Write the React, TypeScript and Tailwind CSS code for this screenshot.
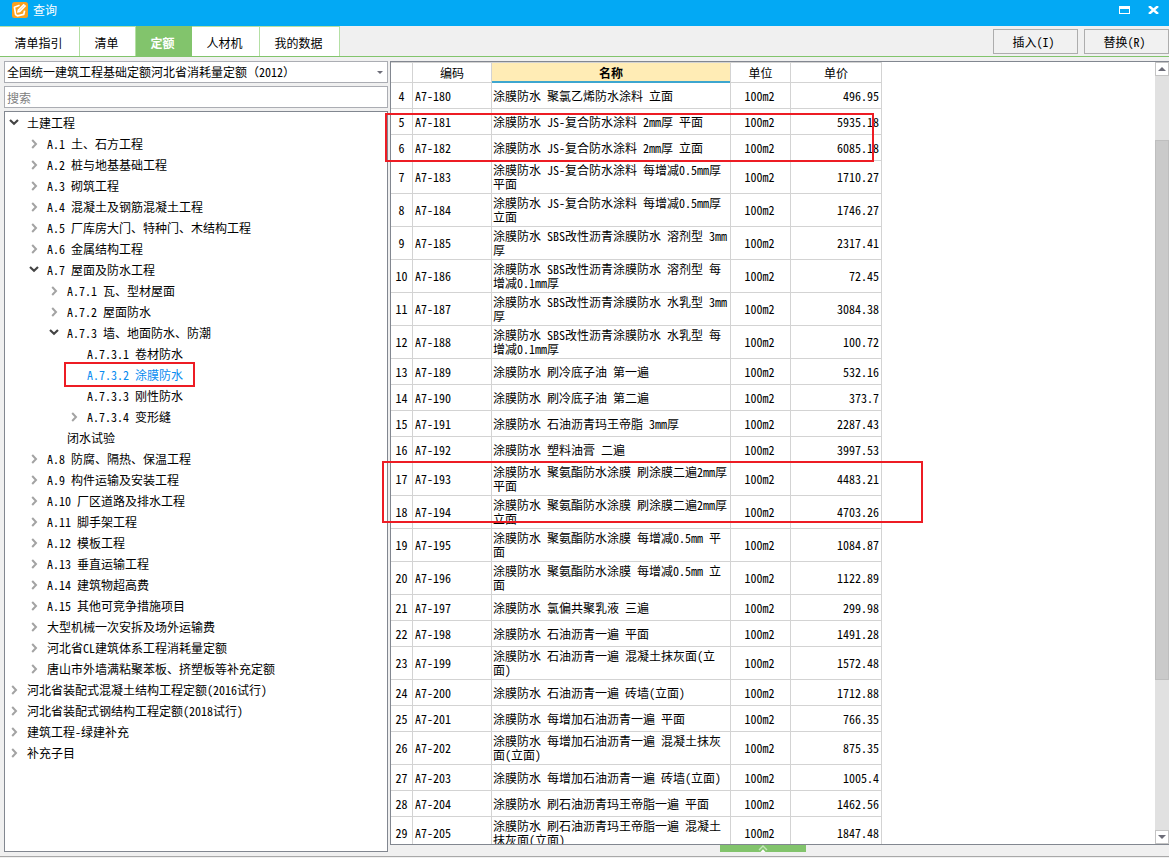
import React from "react";

type Node = { label: string; level: number; state?: "open" | "closed"; selected?: boolean };

const tree: Node[] = [
  { label: "土建工程", level: 0, state: "open" },
  { label: "A.1 土、石方工程", level: 1, state: "closed" },
  { label: "A.2 桩与地基基础工程", level: 1, state: "closed" },
  { label: "A.3 砌筑工程", level: 1, state: "closed" },
  { label: "A.4 混凝土及钢筋混凝土工程", level: 1, state: "closed" },
  { label: "A.5 厂库房大门、特种门、木结构工程", level: 1, state: "closed" },
  { label: "A.6 金属结构工程", level: 1, state: "closed" },
  { label: "A.7 屋面及防水工程", level: 1, state: "open" },
  { label: "A.7.1 瓦、型材屋面", level: 2, state: "closed" },
  { label: "A.7.2 屋面防水", level: 2, state: "closed" },
  { label: "A.7.3 墙、地面防水、防潮", level: 2, state: "open" },
  { label: "A.7.3.1 卷材防水", level: 3 },
  { label: "A.7.3.2 涂膜防水", level: 3, selected: true },
  { label: "A.7.3.3 刚性防水", level: 3 },
  { label: "A.7.3.4 变形缝", level: 3, state: "closed" },
  { label: "闭水试验", level: 2 },
  { label: "A.8 防腐、隔热、保温工程", level: 1, state: "closed" },
  { label: "A.9 构件运输及安装工程", level: 1, state: "closed" },
  { label: "A.10 厂区道路及排水工程", level: 1, state: "closed" },
  { label: "A.11 脚手架工程", level: 1, state: "closed" },
  { label: "A.12 模板工程", level: 1, state: "closed" },
  { label: "A.13 垂直运输工程", level: 1, state: "closed" },
  { label: "A.14 建筑物超高费", level: 1, state: "closed" },
  { label: "A.15 其他可竞争措施项目", level: 1, state: "closed" },
  { label: "大型机械一次安拆及场外运输费", level: 1, state: "closed" },
  { label: "河北省CL建筑体系工程消耗量定额", level: 1, state: "closed" },
  { label: "唐山市外墙满粘聚苯板、挤塑板等补充定额", level: 1, state: "closed" },
  { label: "河北省装配式混凝土结构工程定额(2016试行)", level: 0, state: "closed" },
  { label: "河北省装配式钢结构工程定额(2018试行)", level: 0, state: "closed" },
  { label: "建筑工程-绿建补充", level: 0, state: "closed" },
  { label: "补充子目", level: 0, state: "closed" },
];

const indents = ["pl-1", "pl-6", "pl-11", "pl-16"];

const rows: [number, string, string][] = [
  [4, "聚氯乙烯防水涂料 立面", "496.95"],
  [5, "JS-复合防水涂料 2mm厚 平面", "5935.18"],
  [6, "JS-复合防水涂料 2mm厚 立面", "6085.18"],
  [7, "JS-复合防水涂料 每增减0.5mm厚 平面", "1710.27"],
  [8, "JS-复合防水涂料 每增减0.5mm厚 立面", "1746.27"],
  [9, "SBS改性沥青涂膜防水 溶剂型 3mm厚", "2317.41"],
  [10, "SBS改性沥青涂膜防水 溶剂型 每增减0.1mm厚", "72.45"],
  [11, "SBS改性沥青涂膜防水 水乳型 3mm厚", "3084.38"],
  [12, "SBS改性沥青涂膜防水 水乳型 每增减0.1mm厚", "100.72"],
  [13, "刷冷底子油 第一遍", "532.16"],
  [14, "刷冷底子油 第二遍", "373.7"],
  [15, "石油沥青玛王帝脂 3mm厚", "2287.43"],
  [16, "塑料油膏 二遍", "3997.53"],
  [17, "聚氨酯防水涂膜 刷涂膜二遍2mm厚 平面", "4483.21"],
  [18, "聚氨酯防水涂膜 刷涂膜二遍2mm厚 立面", "4703.26"],
  [19, "聚氨酯防水涂膜 每增减0.5mm 平面", "1084.87"],
  [20, "聚氨酯防水涂膜 每增减0.5mm 立面", "1122.89"],
  [21, "氯偏共聚乳液 三遍", "299.98"],
  [22, "石油沥青一遍 平面", "1491.28"],
  [23, "石油沥青一遍 混凝土抹灰面(立面)", "1572.48"],
  [24, "石油沥青一遍 砖墙(立面)", "1712.88"],
  [25, "每增加石油沥青一遍 平面", "766.35"],
  [26, "每增加石油沥青一遍 混凝土抹灰面(立面)", "875.35"],
  [27, "每增加石油沥青一遍 砖墙(立面)", "1005.4"],
  [28, "刷石油沥青玛王帝脂一遍 平面", "1462.56"],
  [29, "刷石油沥青玛王帝脂一遍 混凝土抹灰面(立面)", "1847.48"],
];

const tabs = [
  { label: "清单指引", width: "w-20" },
  { label: "清单", width: "w-14" },
  { label: "定额", width: "w-14", active: true },
  { label: "人材机", width: "w-17" },
  { label: "我的数据", width: "w-20" },
];

function Logo() {
  return (
    <svg width="16" height="16" viewBox="0 0 16 16" fill="none" aria-hidden="true">
      <rect width="16" height="16" rx="2.5" fill="#f9a11f" />
      <path d="M7.6 3.2 2.4 5.2 3.6 12.6 5.4 13.8 11.8 12.4 12.6 8.6" stroke="#fff" strokeWidth="1.7" strokeLinejoin="round" />
      <path d="M5 10.8 5.6 7.8 11.6 1.8 14.2 4 8.2 10.2z" fill="#fff" />
      <path d="M7.2 8.6 12.2 3.6" stroke="#fbc777" strokeWidth="0.7" />
    </svg>
  );
}

function Chevron({ state }: { state?: "open" | "closed" }) {
  return (
    <svg className="mr-[3px] shrink-0" width="10" height="10" viewBox="0 0 10 10" fill="none" aria-hidden="true">
      {state === "open" && <path d="M1 2 5 5.7 9 2" stroke="#444" strokeWidth="2.2" />}
      {state === "closed" && <path d="M3.2 1 7 5 3.2 9" stroke="#a3a3a3" strokeWidth="2" />}
    </svg>
  );
}

export default function App() {
  return (
    <div className="flex h-screen flex-col overflow-hidden bg-[#f0f0f0] font-['Noto_Sans_Mono_CJK_SC','Noto_Sans_CJK_SC',sans-serif] text-[12px] leading-[14px] text-black">
      <header className="flex h-[26px] shrink-0 items-start bg-[#03a9f4] pl-3 pt-0.5 text-white">
        <Logo />
        <h1 className="ml-[5px] mt-px grow">查询</h1>
        <button aria-label="最大化" className="mr-[18px] mt-1">
          <svg width="11" height="8" viewBox="0 0 11 8" aria-hidden="true">
            <path d="M0 0h11v8H0zM1 3v4h9V3z" fill="#fff" fillRule="evenodd" />
          </svg>
        </button>
        <button aria-label="关闭" className="mr-[10px] mt-1">
          <svg width="11" height="8" viewBox="0 0 11 8" aria-hidden="true">
            <path d="M1 0 10 8M10 0 1 8" stroke="#fff" strokeWidth="2.4" />
          </svg>
        </button>
      </header>

      <div className="flex h-[31px] shrink-0 border-b border-[#82c46c]">
        <nav className="flex">
          {tabs.map((t) => (
            <button
              key={t.label}
              className={`${t.width} border-r border-t pr-0.5 pt-0.5 ${
                t.active ? "border-[#82c46c] bg-[#82c46c] font-bold text-white" : "border-[#b4e0a4] bg-white"
              }`}
            >
              {t.label}
            </button>
          ))}
        </nav>
        <div className="ml-auto flex gap-1.5 pt-[3px]">
          <button className="h-[25px] w-[85px] border border-[#adadad] bg-[#f1f1f1] pr-1">插入(I)</button>
          <button className="h-[25px] w-[85px] border border-[#adadad] bg-[#f1f1f1] pr-1">替换(R)</button>
        </div>
      </div>

      <main className="flex min-h-0 grow pl-1 pt-1">
        <aside className="mb-1 flex w-96 shrink-0 flex-col gap-[3px]">
          <div className="relative shrink-0">
            <select
              aria-label="定额库"
              className="block h-[22px] w-full appearance-none border border-[#abadb3] bg-white pl-0.5"
            >
              <option>全国统一建筑工程基础定额河北省消耗量定额（2012）</option>
            </select>
            <svg className="pointer-events-none absolute right-[5px] top-2.5" width="6" height="3" viewBox="0 0 6 3" aria-hidden="true">
              <path d="M0 0h6L3 3z" fill="#6d6d78" />
            </svg>
          </div>
          <input
            aria-label="搜索"
            placeholder="搜索"
            className="block h-[22px] w-full shrink-0 border border-[#abadb3] bg-white pl-0.5 placeholder:text-[#808080]"
          />
          <ul className="min-h-0 grow overflow-hidden border border-[#828790] bg-white">
            {tree.map((n) => (
              <li key={n.label} className={`flex ${indents[n.level]}`}>
                <button className={`relative flex h-[21px] items-center whitespace-pre pr-3 ${n.selected ? "text-[#0a8cf0]" : ""}`}>
                  <Chevron state={n.state} />
                  <span className="pl-[5px]">{n.label}</span>
                  {n.selected && <span className="absolute -bottom-0.5 -left-[5px] right-0 -top-0.5 border-2 border-[#ed1c24]" />}
                </button>
              </li>
            ))}
          </ul>
        </aside>

        <section className="ml-0.5 flex min-w-0 grow flex-col">
          <div className="relative flex min-h-0 grow border-b border-l border-t border-[#828790] bg-white">
            <div className="min-w-0 grow overflow-hidden">
              <table className="w-[491px] table-fixed border-separate border-spacing-0">
                <colgroup>
                  <col className="w-[22px]" />
                  <col className="w-[79px]" />
                  <col className="w-[239px]" />
                  <col className="w-[60px]" />
                  <col className="w-[91px]" />
                </colgroup>
                <thead>
                  <tr className="h-[21px] [&>th]:border-r [&>th]:border-t [&>th]:border-[#d3d3d3] [&>th]:p-0">
                    <th className="border-b" aria-label="序号" />
                    <th className="border-b font-normal">编码</th>
                    <th className="bg-[#ffecb5] shadow-[inset_0_-2px_0_#3ea6cf]">名称</th>
                    <th className="border-b font-normal">单位</th>
                    <th className="border-b font-normal">单价</th>
                  </tr>
                </thead>
                <tbody className="[&_td]:border-b [&_td]:border-r [&_td]:border-[#d3d3d3] [&_td]:py-0.5">
                  {rows.map(([no, name, price]) => (
                    <tr key={no} className="h-[26px]">
                      <td className="px-0 text-center">{no}</td>
                      <td className="px-0.5">A7-{176 + no}</td>
                      <td className="px-px">涂膜防水 {name}</td>
                      <td className="pl-0 pr-0.5 text-center">100m2</td>
                      <td className="px-0.5 text-right">{price}</td>
                    </tr>
                  ))}
                </tbody>
              </table>
            </div>
            <div className="flex w-3.5 shrink-0 flex-col bg-[#e1e1e1]">
              <button aria-label="向上滚动" className="flex h-3.5 shrink-0 items-center justify-center border border-[#c4c4c4] bg-white">
                <svg width="8" height="4" viewBox="0 0 8 4" aria-hidden="true">
                  <path d="M4 0 8 4H0z" fill="#6d6d78" />
                </svg>
              </button>
              <div className="grow-[64] basis-0" />
              <div className="grow-[540] basis-0 border border-[#bebebe] bg-[#cacaca]" />
              <div className="grow-[150] basis-0" />
              <button aria-label="向下滚动" className="flex h-3.5 shrink-0 items-center justify-center border border-[#c4c4c4] bg-white">
                <svg width="8" height="4" viewBox="0 0 8 4" aria-hidden="true">
                  <path d="M0 0h8L4 4z" fill="#6d6d78" />
                </svg>
              </button>
            </div>
            <div className="pointer-events-none absolute -left-1.5 top-[51px] h-[49px] w-[489px] border-2 border-[#ed1c24]" />
            <div className="pointer-events-none absolute -left-[9px] top-[399px] h-[62px] w-[541px] border-2 border-[#ed1c24]" />
          </div>
          <div className="h-[11px] shrink-0">
            <button aria-label="展开" className="ml-[330px] flex h-[7px] w-[86px] items-end justify-center bg-[#82c46c]">
              <svg width="10" height="7" viewBox="0 0 10 7" fill="none" aria-hidden="true">
                <path d="M1 5 5 1l4 4" stroke="#c5e6ba" strokeWidth="1.4" />
                <path d="M2.5 7 5 4.2 7.5 7z" fill="#fff" />
              </svg>
            </button>
          </div>
        </section>
      </main>
      <footer className="h-0.5 shrink-0 border-t border-[#a8a8a8]" />
    </div>
  );
}
